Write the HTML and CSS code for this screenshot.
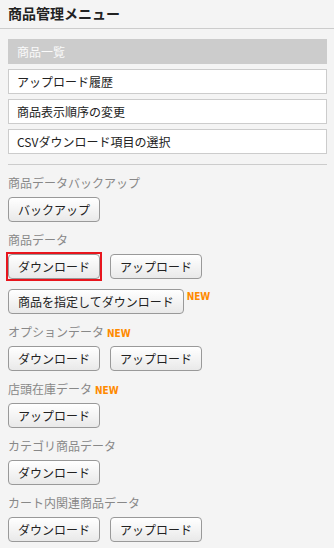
FILE: index.html
```html
<!DOCTYPE html>
<html>
<head>
    <title>商品管理メニュー</title>
    <link rel="stylesheet" href="styles.css">
</head>
<body>
    <h1 class="title">商品管理メニュー</h1>

    <div class="content">
        <ul class="menu">
            <li class="menu-item current">商品一覧</li>
            <li class="menu-item"><a href="#">アップロード履歴</a></li>
            <li class="menu-item"><a href="#">商品表示順序の変更</a></li>
            <li class="menu-item"><a href="#">CSVダウンロード項目の選択</a></li>
        </ul>

        <hr class="divider">

        <div class="section">
            <div class="section-label">商品データバックアップ</div>
            <div class="buttons">
                <button class="btn">バックアップ</button>
            </div>
        </div>

        <div class="section">
            <div class="section-label">商品データ</div>
            <div class="buttons">
                <span class="highlight"><button class="btn">ダウンロード</button></span>
                <button class="btn">アップロード</button>
            </div>
            <div class="buttons extra">
                <button class="btn">商品を指定してダウンロード</button><span class="new new-btn">NEW</span>
            </div>
        </div>

        <div class="section">
            <div class="section-label">オプションデータ<span class="new">NEW</span></div>
            <div class="buttons">
                <button class="btn">ダウンロード</button>
                <button class="btn">アップロード</button>
            </div>
        </div>

        <div class="section">
            <div class="section-label">店頭在庫データ<span class="new">NEW</span></div>
            <div class="buttons">
                <button class="btn">アップロード</button>
            </div>
        </div>

        <div class="section">
            <div class="section-label">カテゴリ商品データ</div>
            <div class="buttons">
                <button class="btn">ダウンロード</button>
            </div>
        </div>

        <div class="section">
            <div class="section-label">カート内関連商品データ</div>
            <div class="buttons">
                <button class="btn">ダウンロード</button>
                <button class="btn">アップロード</button>
            </div>
        </div>
    </div>
</body>
</html>
```

FILE: styles.css
```css
body {
    margin: 0;
    padding: 0;
    background-color: #f4f4f4;
    font-family: "Noto Sans CJK JP", "Noto Sans", sans-serif;
    font-size: 12px;
    color: #222;
}

.title {
    margin: 0;
    padding: 3px 8px 5px;
    font-size: 14px;
    line-height: 20px;
    font-weight: bold;
    color: #222;
    border-bottom: 1px solid #ccc;
}

.content {
    padding: 0 7px 0 8px;
}

.menu {
    list-style: none;
    margin: 10px 0 0;
    padding: 0;
}

.menu-item {
    height: 25px;
    margin-bottom: 5px;
    box-sizing: border-box;
    background-color: #fff;
    border: 1px solid #ccc;
    line-height: 23px;
    padding-left: 8px;
}

.menu-item a {
    color: #222;
    text-decoration: none;
}

.menu-item.current {
    background-color: #ccc;
    color: #fafafa;
}

.divider {
    margin: 10px 0 0;
    border: none;
    border-top: 1px solid #ccc;
    height: 0;
}

.section {
    margin-top: 9px;
}

.section-label {
    height: 18px;
    line-height: 18px;
    color: #888;
    margin-bottom: 5px;
    overflow: hidden;
}

.buttons {
    display: flex;
    align-items: flex-start;
    gap: 10px;
}

.buttons.extra {
    margin-top: 10px;
    gap: 3px;
}

.btn {
    height: 25px;
    padding: 0 9px;
    border: 1px solid #999;
    border-radius: 4px;
    background: linear-gradient(#ffffff, #e9e9e9);
    font-family: "Noto Sans CJK JP", "Noto Sans", sans-serif;
    font-size: 12px;
    line-height: 23px;
    color: #222;
    cursor: pointer;
}

.highlight {
    display: flex;
    margin: -2px;
    border: 2px solid #e8151d;
}

.new {
    font-family: "Liberation Sans Narrow", "DejaVu Sans Condensed", sans-serif;
    font-weight: bold;
    font-size: 10px;
    line-height: 10px;
    color: #ff8a00;
    margin-left: 3px;
}

.new-btn {
    margin-left: 0;
    margin-top: 3px;
}
```
